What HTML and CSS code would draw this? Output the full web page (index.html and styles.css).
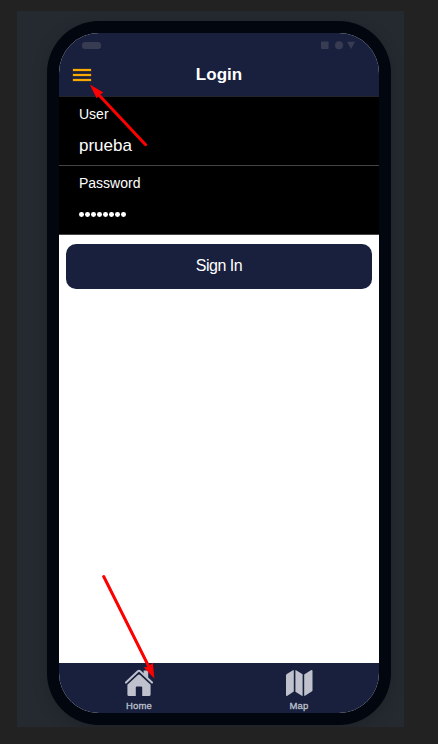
FILE: index.html
```html
<!DOCTYPE html>
<html lang="en">
<head>
<meta charset="utf-8">
<title>Login</title>
<link rel="stylesheet" href="styles.css">
</head>
<body>
<main class="stage">
  <div class="phone">
    <div class="screen">
      <header class="header">
        <div class="status">
          <span class="pill"></span>
          <svg class="signals" width="36" height="9" viewBox="0 0 36 9"><rect x="0" y=".5" width="7.6" height="7.6" rx=".8"/><circle cx="18" cy="4.3" r="4"/><path d="M26 .8h8L30 8z"/></svg>
        </div>
        <div class="toolbar">
          <span class="menu"><i></i><i></i><i></i></span>
          <h1 class="title">Login</h1>
        </div>
      </header>
      <section class="form">
        <div class="field"><span class="label">User</span><span class="value">prueba</span></div>
        <div class="field"><span class="label">Password</span><span class="dots"><i></i><i></i><i></i><i></i><i></i><i></i><i></i><i></i></span></div>
      </section>
      <button class="button">Sign In</button>
      <nav class="tabs">
        <div class="tab">
          <svg width="30" height="28" viewBox="0 0 30 28"><path d="M19.6 1.6h4.6v8l-4.6-4.2z"/><path class="roof" d="M2 13.6 13.9 2.3Q15 1.3 16.1 2.3L28 13.6"/><path d="M13.9 5.9Q15 4.9 16.1 5.9L26.6 15.8V25.4q0 1.6-1.6 1.6H18.2V18.4q0-1-1-1h-4.4q-1 0-1 1V27H5q-1.6 0-1.6-1.6V15.8z"/></svg>
          <span>Home</span>
        </div>
        <div class="tab">
          <svg width="30" height="28" viewBox="0 0 30 28"><path d="M2 6.6Q2 5.6 2.8 5.1L9 1.2Q9.8.8 9.8 1.8V22.6L3.4 26.7Q2 27.4 2 25.9z"/><path d="M11.4 1.5q0-.8.7-.3L18.6 5.2V26.4q0 .9-.8.4L11.4 22.8z"/><path d="M20.2 5.4 26.9 1.2Q28.5.5 28.5 2V21.2q0 .9-.8 1.4L21 26.8q-.8.4-.8-.5z"/></svg>
          <span>Map</span>
        </div>
      </nav>
    </div>
  </div>
  <svg class="arrows" width="438" height="744" viewBox="0 0 438 744"><path class="shaft" d="M145.6 144.7 98 94M103.7 576.5 149 667"/><path class="head" d="M89.8 84.6 103.4 92.4 99.8 94.8 96.6 98.3zM154.4 678.5 143.8 667.5 148.5 666.4 152.8 662.8z"/></svg>
</main>
</body>
</html>
```
FILE: styles.css
```css
* { box-sizing: border-box; }
body {
  margin: 0;
  padding: 11px 34px 17px 17px;
  background: #222;
  font-family: "Liberation Sans", Arial, sans-serif;
  color: #fff;
}
.stage {
  width: 387px;
  height: 716px;
  padding: 10px 13px 2px 30px;
  background: #252a31;
  overflow: hidden;
}
.phone {
  width: 344px;
  height: 704px;
  padding: 12px;
  border-radius: 52px;
  background: #02060f;
  box-shadow: 0 4px 16px rgba(0, 0, 0, .18);
}
.screen {
  display: flex;
  flex-direction: column;
  height: 680px;
  border-radius: 40px;
  background: #fff;
  overflow: hidden;
}
.header {
  height: 64px;
  background: #18203e;
  border-bottom: 1px solid #22242c;
}
.status {
  display: flex;
  justify-content: space-between;
  align-items: center;
  height: 20px;
  padding: 4px 22px 0 23px;
}
.pill { width: 19px; height: 7px; border-radius: 3px; background: #373c52; }
.signals { fill: #373c52; }
.toolbar {
  display: grid;
  grid-template-columns: 18px 1fr 18px;
  align-items: center;
  height: 43px;
  padding: 0 14px;
}
.menu { display: grid; gap: 3px; }
.menu i { height: 2px; background: #f8aa00; box-shadow: 0 0 0 .5px rgba(248, 170, 0, .25); }
.title { margin: 0; font-size: 17px; line-height: 20px; text-align: center; }
.form { background: #000; }
.field {
  display: flex;
  flex-direction: column;
  height: 69px;
  padding: 9px 20px 0;
  border-bottom: 1px solid #444;
}
.label { font-size: 14px; line-height: 17px; }
.value { margin-top: 13px; font-size: 17px; line-height: 20px; }
.dots { display: flex; gap: 1.2px; margin-top: 20px; }
.dots i { width: 4.8px; height: 4.8px; border-radius: 50%; background: #fff; }
.button {
  height: 45px;
  margin: 9px 7px 0;
  padding: 0 0 1px;
  border: 0;
  border-radius: 10px;
  background: #18203e;
  color: #fff;
  font: 16px "Liberation Sans", Arial, sans-serif;
  letter-spacing: -.48px;
}
.tabs {
  display: flex;
  height: 50px;
  margin-top: auto;
  background: #18203e;
}
.tab {
  flex: 1;
  display: flex;
  flex-direction: column;
  align-items: center;
  padding-top: 6px;
  color: #bfc2cd;
  font-size: 9.5px;
  letter-spacing: .2px;
  line-height: 12px;
  -webkit-text-stroke: .3px #bfc2cd;
}
.tab svg { fill: #bfc2cd; }
.tab span { margin-top: 3px; }
.tab .roof {
  fill: none;
  stroke: #bfc2cd;
  stroke-width: 2;
  stroke-linecap: round;
  stroke-linejoin: round;
}
.arrows { position: absolute; left: 0; top: 0; }
.shaft { fill: none; stroke: #f00; stroke-width: 3; stroke-linecap: round; }
.head { fill: #f00; }
```
